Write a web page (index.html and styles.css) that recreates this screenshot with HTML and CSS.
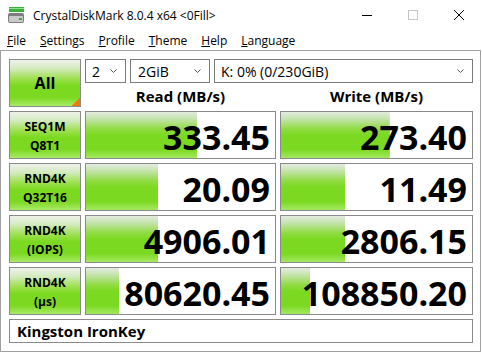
FILE: index.html
```html
<!DOCTYPE html>
<html lang="en">
<head>
    <meta charset="UTF-8">
    <meta name="viewport" content="width=device-width, initial-scale=1.0">
    <title>CrystalDiskMark 8.0.4 x64 &lt;0Fill&gt;</title>
    <link rel="stylesheet" href="styles.css">
</head>
<body>

    <div class="titlebar">
        <svg class="app-icon" width="16" height="16" viewBox="0 0 16 16">
            <rect x="1" y="0" width="15" height="5" fill="#36b336"/>
            <rect x="1" y="1" width="15" height="1" fill="#8fe08f"/>
            <rect x="0" y="6" width="16" height="10" rx="2" fill="#7d7d7d"/>
            <rect x="1" y="9" width="14" height="6" rx="1" fill="#c9c9c9"/>
            <rect x="11" y="11" width="3" height="2" fill="#36b336"/>
        </svg>
        <span class="title">CrystalDiskMark 8.0.4 x64 &lt;0Fill&gt;</span>
        <div class="controls">
            <span class="ctl">
                <svg width="10" height="10" viewBox="0 0 10 10"><path d="M0 5.5h10" stroke="#000" stroke-width="1"/></svg>
            </span>
            <span class="ctl">
                <svg width="10" height="10" viewBox="0 0 10 10"><rect x="0.5" y="0.5" width="9" height="9" fill="none" stroke="#c4c4c4" stroke-width="1"/></svg>
            </span>
            <span class="ctl">
                <svg width="10" height="10" viewBox="0 0 10 10"><path d="M0 0L10 10M10 0L0 10" stroke="#000" stroke-width="1"/></svg>
            </span>
        </div>
    </div>

    <div class="menubar">
        <span><u>F</u>ile</span>
        <span><u>S</u>ettings</span>
        <span><u>P</u>rofile</span>
        <span><u>T</u>heme</span>
        <span><u>H</u>elp</span>
        <span><u>L</u>anguage</span>
    </div>

    <div class="client">
        <div class="grid">
            <div class="btn all">All</div>

            <div class="top-right">
                <div class="drives">
                    <div class="select sel-count">
                        <span>2</span>
                        <svg width="7" height="4" viewBox="0 0 7 4"><path d="M0.5 0.5L3.5 3.5L6.5 0.5" fill="none" stroke="#555" stroke-width="1"/></svg>
                    </div>
                    <div class="select sel-size">
                        <span>2GiB</span>
                        <svg width="7" height="4" viewBox="0 0 7 4"><path d="M0.5 0.5L3.5 3.5L6.5 0.5" fill="none" stroke="#555" stroke-width="1"/></svg>
                    </div>
                    <div class="select sel-drive">
                        <span>K: 0% (0/230GiB)</span>
                        <svg width="7" height="4" viewBox="0 0 7 4"><path d="M0.5 0.5L3.5 3.5L6.5 0.5" fill="none" stroke="#555" stroke-width="1"/></svg>
                    </div>
                </div>
                <div class="heads">
                    <div class="head-read">Read (MB/s)</div>
                    <div class="head-write">Write (MB/s)</div>
                </div>
            </div>

            <div class="btn">SEQ1M<br>Q8T1</div>
            <div class="meter" style="background-size: 58.7% 100%">333.45</div>
            <div class="meter" style="background-size: 57% 100%">273.40</div>

            <div class="btn">RND4K<br>Q32T16</div>
            <div class="meter" style="background-size: 38.1% 100%">20.09</div>
            <div class="meter" style="background-size: 33.7% 100%">11.49</div>

            <div class="btn">RND4K<br>(IOPS)</div>
            <div class="meter" style="background-size: 38.1% 100%">4906.01</div>
            <div class="meter" style="background-size: 33.7% 100%">2806.15</div>

            <div class="btn">RND4K<br>(μs)</div>
            <div class="meter" style="background-size: 17.5% 100%">80620.45</div>
            <div class="meter" style="background-size: 15.3% 100%">108850.20</div>

            <div class="name">Kingston IronKey</div>
        </div>
    </div>

</body>
</html>
```

FILE: styles.css
```css
* {
    box-sizing: border-box;
}
body {
    margin: 0;
    width: 482px;
    height: 352px;
    background: #ffffff;
    color: #000;
    font-family: "Open Sans", "Noto Sans", sans-serif;
    overflow: hidden;
}

/* title bar */
.titlebar {
    height: 30px;
    display: flex;
    align-items: center;
    padding-left: 8px;
}
.app-icon {
    margin-right: 9px;
    margin-top: -1px;
}
.title {
    font-size: 12px;
    color: #000;
}
.controls {
    margin-left: auto;
    display: flex;
    height: 30px;
}
.ctl {
    width: 46px;
    display: flex;
    align-items: center;
    justify-content: center;
}

/* menu */
.menubar {
    height: 20px;
    display: flex;
    align-items: center;
    padding: 1px 0 0 0;
    font-size: 12px;
}
.menubar span {
    padding: 0 7px;
}

/* main window area */
.client {
    width: 481px;
    height: 302px;
    border: 1px solid #a0a0a0;
    padding: 8px 0 0 8px;
}
.grid {
    display: grid;
    grid-template-columns: 72px 191px 193px;
    grid-template-rows: 48px 48px 48px 48px 48px 24px;
    column-gap: 4px;
    row-gap: 4px;
}

.btn {
    border: 1px solid #8a8a8a;
    background: linear-gradient(to bottom, #eef2ea 0%, #d4ebc0 18%, #9fe052 40%, #7cd921 55%, #7cd921 82%, #a9ea68 100%);
    display: flex;
    align-items: center;
    justify-content: center;
    text-align: center;
    font-weight: bold;
    font-size: 12px;
    line-height: 19px;
    padding-top: 1px;
}
.all {
    font-size: 16px;
    background-image:
        linear-gradient(135deg, transparent 50%, #f07a10 50%),
        linear-gradient(to bottom, #eef2ea 0%, #d4ebc0 18%, #9fe052 40%, #7cd921 55%, #7cd921 82%, #a9ea68 100%);
    background-size: 8px 8px, 100% 100%;
    background-position: right bottom, 0 0;
    background-repeat: no-repeat;
}

.top-right {
    grid-column: 2 / 4;
    display: flex;
    flex-direction: column;
}
.drives {
    display: flex;
    gap: 4px;
    height: 24px;
}
.select {
    border: 1px solid #7a7a7a;
    display: flex;
    align-items: center;
    justify-content: space-between;
    padding: 0 8px 0 6px;
    font-size: 14px;
}
.sel-count {
    width: 41px;
}
.sel-size {
    width: 80px;
    padding-left: 7px;
}
.sel-drive {
    flex: 1;
    padding-left: 6px;
}
.heads {
    flex: 1;
    display: grid;
    grid-template-columns: 191px 193px;
    column-gap: 4px;
    align-items: center;
    font-weight: bold;
    font-size: 15px;
    text-align: center;
    padding-top: 2px;
}

.meter {
    border: 1px solid #8a8a8a;
    background-color: #fff;
    background-image: linear-gradient(to bottom, #e4ebe1 0%, #c2e3a8 16%, #91dc45 36%, #7cd921 50%, #7cd921 82%, #a4e962 100%);
    background-repeat: no-repeat;
    display: flex;
    align-items: center;
    justify-content: flex-end;
    padding: 4px 5px 0 0;
    font-weight: bold;
    font-size: 34px;
}

.name {
    grid-column: 1 / 4;
    border: 1px solid #8a8a8a;
    display: flex;
    align-items: center;
    padding-left: 7px;
    font-weight: bold;
    font-size: 15px;
}
```
